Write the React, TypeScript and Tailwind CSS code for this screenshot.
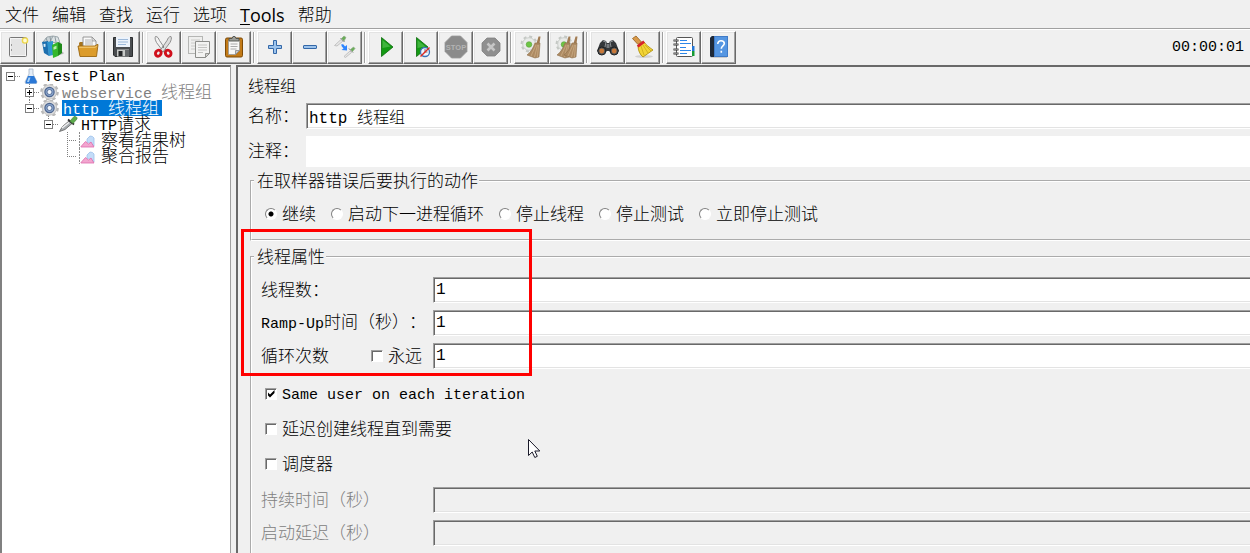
import React from "react";

type IconProps = { children: React.ReactNode };

function Glyph({ children }: IconProps) {
  return (
    <svg viewBox="0 0 24 24" className="size-6" aria-hidden="true">
      {children}
    </svg>
  );
}

const NewIcon = () => (
  <Glyph>
    <rect x="3.5" y="2.5" width="17" height="19" rx="1" fill="#f4f4f4" stroke="#777" />
    <path d="M5 4h12v3h2v13H5z" fill="#e4e4e4" />
    <path d="M5.5 9v2M5.5 14v2" stroke="#999" />
    <circle cx="19" cy="5.5" r="2.6" fill="#fffbd0" stroke="#ecd54a" strokeWidth="1.4" />
  </Glyph>
);

const BooksIcon = () => (
  <Glyph>
    <path d="M14 21l8-2 1-1-4-3z" fill="#b9b9b9" />
    <path d="M2 7l4-5 6-1 1 6-5 3z" fill="#c9d2d6" stroke="#8a979d" strokeWidth=".8" />
    <path d="M9 7l3-6 5 1 2 6z" fill="#dde3e5" stroke="#8a979d" strokeWidth=".8" />
    <path d="M5 3l2 5M9 2l1 5M14 2l1 5" stroke="#7c8a91" strokeWidth=".8" />
    <path d="M1 7l6-1 1 15-5-3z" fill="#1d6fae" />
    <path d="M6 7l6-1v14l-4 1z" fill="#2f96cf" />
    <path d="M2.5 9l2-.3v3l-1.8.3z" fill="#d9edf8" />
    <path d="M11 10l6-3v14l-5 2z" fill="#35b72c" />
    <path d="M17 7l4 2v9l-4 3z" fill="#1f8a1a" />
    <path d="M12.5 12l3-1.3v3l-3 1z" fill="#bdf0a9" />
  </Glyph>
);

const OpenIcon = () => (
  <Glyph>
    <path d="M3 8l1-1h5l1 1h10v13H4z" fill="#a8741b" />
    <path d="M7 2h9l4 4v9H7z" fill="#fafafa" stroke="#8c8c8c" strokeWidth=".9" />
    <path d="M9 5h6M9 7h8M9 9h8" stroke="#aaa" strokeWidth=".9" />
    <path d="M16 2l4 4h-4z" fill="#ddd" stroke="#8c8c8c" strokeWidth=".7" />
    <path d="M2 11h17l2-1.5h1l-1.500 12H4z" fill="#dc9c2b" stroke="#9b6812" strokeWidth=".9" />
    <path d="M3.200 12.200h16l1.500-1" stroke="#f8d27e" fill="none" />
  </Glyph>
);

const SaveIcon = () => (
  <Glyph>
    <path d="M2.500 2.500h19v19H4l-1.500-1.500z" fill="#4a4d50" stroke="#2c2e30" />
    <rect x="5" y="2" width="14" height="10" fill="#edf3fb" />
    <path d="M7 4.500h10M7 7h10M7 9.500h8" stroke="#9db9d9" />
    <rect x="6" y="14.500" width="12" height="7" fill="#c8cac8" />
    <rect x="7.500" y="16" width="4" height="5" fill="#26282a" />
    <rect x="14" y="15" width="4" height="6.500" fill="#66696b" />
  </Glyph>
);

const CutIcon = () => (
  <Glyph>
    <path d="M3.500 1.500c2.500 0 3 2 4 4L14 15l-2.500 2L4.500 7.500C3.500 5.500 2.500 3 3.500 1.500z" fill="#f2f2f2" stroke="#858585" strokeWidth=".9" />
    <path d="M19 1.500c-2.500 0-3 2-4 4L8.500 15l2.500 2L18 7.500c1-2 2-4.500 1-6z" fill="#dedede" stroke="#858585" strokeWidth=".9" />
    <circle cx="11.300" cy="12" r=".8" fill="#555" />
    <ellipse cx="6.300" cy="18.200" rx="2.700" ry="3.100" fill="none" stroke="#d0101c" strokeWidth="2.900" transform="rotate(35 6.300 18.200)" />
    <ellipse cx="16.200" cy="18.200" rx="2.700" ry="3.100" fill="none" stroke="#d0101c" strokeWidth="2.900" transform="rotate(-35 16.200 18.200)" />
  </Glyph>
);

const CopyIcon = () => (
  <Glyph>
    <rect x="1.500" y="1.500" width="14" height="17" fill="#efefee" stroke="#b5b6b4" />
    <path d="M4 5h9M4 8h4M4 11h4M4 14h4" stroke="#cacac8" />
    <path d="M8.500 6.500h14v12l-4 4h-10z" fill="#f3f3f2" stroke="#8c8d8a" />
    <path d="M11 10h9M11 12.500h9M11 15h9M11 17.500h5" stroke="#c4c4c2" />
    <path d="M18.500 22.500v-4h4z" fill="#d0d0ce" stroke="#8c8d8a" strokeWidth=".9" />
  </Glyph>
);

const PasteIcon = () => (
  <Glyph>
    <rect x="3.500" y="3" width="17" height="19" rx="1.500" fill="#c27a17" stroke="#7e4b07" />
    <path d="M6.500 5.500h11v10l-4 4h-7z" fill="#f7f7f6" stroke="#999" strokeWidth=".8" />
    <path d="M8.500 9h7M8.500 11.500h7M8.500 14h6" stroke="#aaa" />
    <path d="M13.500 19.500v-4h4z" fill="#ccc" stroke="#888" strokeWidth=".8" />
    <path d="M7 6V3.500h3l1-2h2l1 2h3V6z" fill="#9b9d98" stroke="#4e504d" strokeWidth=".9" />
  </Glyph>
);

const PlusIcon = () => (
  <Glyph>
    <path d="M10.500 5.500h3v5h5v3h-5v5h-3v-5h-5v-3h5z" fill="#9cc3ec" stroke="#3468a8" strokeLinejoin="round" />
  </Glyph>
);

const MinusIcon = () => (
  <Glyph>
    <rect x="5.500" y="10.500" width="13" height="3" rx=".5" fill="#9cc3ec" stroke="#3468a8" />
  </Glyph>
);

const ToggleIcon = () => (
  <Glyph>
    <path d="M1.500 10.500l6.500-6 2 1.500-6 5z" fill="#e6e6e6" stroke="#bdbdbd" strokeWidth=".9" />
    <path d="M7.500 3l4 4" stroke="#777" />
    <path d="M8.500 3.500l2.500-2.500 2 1.500-2 3.500z" fill="#69ad58" stroke="#8fae87" strokeWidth=".7" />
    <path d="M11 21.500l6-5.500 1.500 1.500-6 5z" fill="#e6e6e6" stroke="#bdbdbd" strokeWidth=".9" />
    <path d="M16 13.500l4 4" stroke="#777" />
    <path d="M17.500 14.500l3-2.500 1.500 1.500-2.500 3z" fill="#69ad58" stroke="#8fae87" strokeWidth=".7" />
    <path d="M8.500 9l2 .5 1.500 2 2-1.500v5.500l-5.500-.500 2-1.500-2-2.500z" fill="#2f86ff" />
  </Glyph>
);

const PlayShape = () => (
  <>
    <path d="M7.500 2.500v19L19 12z" fill="#139a13" stroke="#0a6a0a" strokeWidth=".8" />
    <path d="M8.500 5v8l8-1.500z" fill="#5fc75b" opacity=".6" />
  </>
);

const StartIcon = () => (
  <Glyph>
    <PlayShape />
  </Glyph>
);

const StartNoPauseIcon = () => (
  <Glyph>
    <PlayShape />
    <circle cx="16" cy="17" r="4.500" fill="#eef5ff" stroke="#3973b8" strokeWidth="1.300" />
    <path d="M16 14v3h2.500" stroke="#555" fill="none" strokeWidth=".8" />
    <path d="M11.500 21.500L20.500 12.500" stroke="#e02a20" strokeWidth="1.500" />
  </Glyph>
);

const StopIcon = () => (
  <Glyph>
    <path d="M7.500 1h9L23 7.500v9L16.500 23h-9L1 16.500v-9z" fill="#8b8b8b" stroke="#999" strokeWidth=".8" />
    <text x="12" y="15" textAnchor="middle" fontFamily="Liberation Sans, sans-serif" fontWeight="bold" fontSize="7.500" fill="#b4b4b4">
      STOP
    </text>
  </Glyph>
);

const ShutdownIcon = () => (
  <Glyph>
    <path d="M8 3h8l5 5v8l-5 5H8l-5-5V8z" fill="#8f8f8f" stroke="#808080" strokeWidth=".8" />
    <path d="M8.500 8.500l7 7M15.500 8.500l-7 7" stroke="#c6c6c6" strokeWidth="2.600" />
  </Glyph>
);

const GearShape = () => (
  <>
    <circle cx="9" cy="9" r="7.400" fill="none" stroke="#c4c8c4" strokeWidth="2" strokeDasharray="3 2.800" />
    <circle cx="9" cy="9" r="6.300" fill="#e9ebe9" stroke="#c0c4c0" strokeWidth=".8" />
    <circle cx="9" cy="9.500" r="2.800" fill="#6cc644" stroke="#5aa03b" strokeWidth=".6" />
  </>
);

const BroomShape = () => (
  <>
    <path d="M18.500 1.500h2l-1 7h-3z" fill="#a27c53" />
    <path d="M15 8h5l-1 14-4 1-8-3c4-3 6-7 8-12z" fill="#ad8a62" stroke="#8d6f4a" strokeWidth=".6" />
    <path d="M16 10l-5 11M17.500 10l-3 12M18.500 10l-1 12" stroke="#cfb08a" strokeWidth=".7" />
  </>
);

const ClearIcon = () => (
  <Glyph>
    <GearShape />
    <BroomShape />
  </Glyph>
);

const ClearAllIcon = () => (
  <Glyph>
    <GearShape />
    <g transform="translate(-5 0)">
      <BroomShape />
    </g>
    <g transform="translate(2 0)">
      <BroomShape />
    </g>
  </Glyph>
);

const SearchIcon = () => (
  <Glyph>
    <path d="M4 8l3-3 3 1 1 2h2l1-2 3-1 3 3 3 8-5 4-5-4h-2l-5 4-5-4z" fill="#34373a" />
    <path d="M7 6l3 1-1 5M17 6l-3 1 1 5" stroke="#8b9093" fill="none" />
    <circle cx="5.800" cy="16" r="4" fill="#54585b" stroke="#1c1e1f" />
    <circle cx="18.200" cy="16" r="4" fill="#54585b" stroke="#1c1e1f" />
    <circle cx="5.800" cy="16" r="2.400" fill="#c97838" />
    <circle cx="18.200" cy="16" r="2.400" fill="#c97838" />
    <rect x="10.500" y="9" width="3" height="4" fill="#777b7e" />
  </Glyph>
);

const ResetIcon = () => (
  <Glyph>
    <ellipse cx="13" cy="21.500" rx="9" ry="1.500" fill="#d2d2d2" />
    <path d="M1.500 3.500L5 1l5.500 6L7 9.500z" fill="#d99a4a" stroke="#95601c" strokeWidth=".8" />
    <path d="M7 11l6-4c2 3 5 5 9 8l-10 7C9 20 7 15 7 11z" fill="#f2d435" stroke="#a88908" strokeWidth=".8" />
    <path d="M10 11l3 9M12 10l5 8M14 10l6 6" stroke="#c9aa1c" strokeWidth=".8" />
    <path d="M5.800 10.500l6.500-5 1.700 2.300-6.500 4.700z" fill="#d6232a" />
  </Glyph>
);

const FunctionsIcon = () => (
  <Glyph>
    <rect x="4.500" y="2.500" width="16" height="19" rx="1" fill="#fff" stroke="#555" />
    <path d="M8 5.500h7M8 8.500h11M8 12.500h6M8 15.500h11M8 18.500h7" stroke="#2c86e8" />
    <path d="M1.500 5.500h5M1.500 9.500h5M1.500 14.500h5M1.500 18.500h5" stroke="#333" strokeWidth="1.800" />
    <path d="M2 5.300h4M2 9.300h4M2 14.300h4M2 18.300h4" stroke="#ddd" strokeWidth=".6" />
    <rect x="20" y="11" width="2.500" height="5" fill="#2276d8" />
    <rect x="20" y="16" width="2.500" height="5" fill="#169b35" />
  </Glyph>
);

const HelpIcon = () => (
  <Glyph>
    <path d="M3 3l2-2h16v21H4l-1-1z" fill="#4a86d4" />
    <path d="M3 3l2-2h2v21H4l-1-1z" fill="#1f2937" />
    <path d="M3.500 22.500H20" stroke="#ccc" />
    <rect x="7.500" y="1.500" width="13" height="20" fill="#5596e2" stroke="#3d77c2" strokeWidth=".8" />
    <path
      d="M10.800 9c0-2.100 1.400-3.200 3.200-3.200s3.300 1 3.300 2.800c0 2.400-3 2.400-3 5.200M14.300 15.800v1.900"
      fill="none"
      stroke="#fff"
      strokeWidth="1.600"
    />
  </Glyph>
);

const toolGroups = [
  [
    { name: "Templates", Icon: NewIcon },
    { name: "New", Icon: BooksIcon },
    { name: "Open", Icon: OpenIcon },
    { name: "Save", Icon: SaveIcon },
  ],
  [
    { name: "Cut", Icon: CutIcon },
    { name: "Copy", Icon: CopyIcon },
    { name: "Paste", Icon: PasteIcon },
  ],
  [
    { name: "Expand all", Icon: PlusIcon },
    { name: "Collapse all", Icon: MinusIcon },
    { name: "Toggle", Icon: ToggleIcon },
  ],
  [
    { name: "Start", Icon: StartIcon },
    { name: "Start no pauses", Icon: StartNoPauseIcon },
    { name: "Stop", Icon: StopIcon },
    { name: "Shutdown", Icon: ShutdownIcon },
  ],
  [
    { name: "Clear", Icon: ClearIcon },
    { name: "Clear all", Icon: ClearAllIcon },
  ],
  [
    { name: "Search", Icon: SearchIcon },
    { name: "Reset search", Icon: ResetIcon },
  ],
  [
    { name: "Function helper", Icon: FunctionsIcon },
    { name: "Help", Icon: HelpIcon },
  ],
];

function MenuBar() {
  return (
    <nav className="flex h-[28px] shrink-0 items-center gap-[13px] pt-0.5 pl-[5px] font-['Open_Sans','Noto_Sans_CJK_SC',sans-serif] text-[17px] leading-6">
      <button>文件</button>
      <button>编辑</button>
      <button>查找</button>
      <button>运行</button>
      <button>选项</button>
      <button className="text-[18px] font-medium">
        <span className="underline underline-offset-2">T</span>ools
      </button>
      <button>帮助</button>
    </nav>
  );
}

function ToolBar() {
  return (
    <header className="flex h-[37px] shrink-0 items-center border-t border-[#a0a0a0] shadow-[inset_0_1px_0_#fff]">
      {toolGroups.map((group, i) => (
        <React.Fragment key={i}>
          {i > 0 && <div className="mx-0.5 h-[31px] w-0.5 border-r border-l border-r-white border-l-[#a0a0a0]" />}
          {group.map(({ name, Icon }) => (
            <button
              key={name}
              aria-label={name}
              className="flex h-[33px] w-[35px] items-center justify-center border border-t-white border-r-[#696969] border-b-[#696969] border-l-white shadow-[inset_-1px_-1px_0_#a0a0a0,inset_1px_1px_0_#e3e3e3]"
            >
              <Icon />
            </button>
          ))}
        </React.Fragment>
      ))}
      <span className="mr-1.5 ml-auto pt-0.5 text-[15px]">00:00:01</span>
    </header>
  );
}

const FlaskIcon = () => (
  <svg viewBox="0 0 20 16" className="h-4 w-5" aria-hidden="true">
    <path d="M9 1h4v5l4 8-1 2H6l-1-2 4-8z" fill="#e4edf7" stroke="#a3b3c5" strokeWidth=".8" />
    <path d="M8 8h6l3 6-1 1.500H6L5.500 14z" fill="#2b78d6" />
    <path d="M8.500 9.500h2L9 14H7z" fill="#a8d2fa" />
  </svg>
);

const GearIcon = () => (
  <svg viewBox="0 0 20 16" className="h-4 w-5" aria-hidden="true">
    <circle cx="10.500" cy="8" r="8.200" fill="none" stroke="#b9b9b9" strokeWidth="2.200" strokeDasharray="3.400 3.040" />
    <circle cx="10.500" cy="8" r="7.200" fill="#dcdcdc" stroke="#b9b9b9" strokeWidth=".8" />
    <circle cx="10.500" cy="8" r="4.600" fill="#8ba6cd" stroke="#4d6690" strokeWidth="1.200" />
    <circle cx="10.500" cy="8" r="2.500" fill="#f1f6fc" stroke="#35507f" strokeWidth=".7" />
  </svg>
);

const PipetteIcon = () => (
  <svg viewBox="0 0 20 16" className="h-4 w-5" aria-hidden="true">
    <path d="M1.500 15.500l3-5L11 5l3 2.500-7 6z" fill="#a9aeb2" stroke="#6a6a6a" strokeWidth=".9" />
    <path d="M4 12l7-5.500" stroke="#f3f3f3" strokeWidth="1.300" />
    <path d="M10 3.500l6 5" stroke="#333" strokeWidth="1.800" />
    <path d="M12 5l4-4.500c2-.5 3.500 1 3 2.500L15 7.500z" fill="#5cab4c" stroke="#4a8a3e" strokeWidth=".7" />
  </svg>
);

const GraphIcon = () => (
  <svg viewBox="0 0 20 16" className="h-4 w-5" aria-hidden="true">
    <path d="M2.500 0v16" stroke="#8a8a8a" strokeDasharray="2 1" />
    <path d="M10 10V7l3-3 2.500 .5L17 6v8z" fill="#c3dcf8" stroke="#9dc0ea" strokeWidth=".8" />
    <path d="M4 14.500l4.500-5 3 2.500L14 10l3 5H4z" fill="#f2a6cf" stroke="#dd6bac" strokeWidth=".8" />
  </svg>
);

type BranchProps = { open?: boolean; leaf?: boolean; up?: boolean; down?: boolean };

function Branch({ open, leaf, up, down }: BranchProps) {
  const dots = { stroke: "#808080", strokeDasharray: "1 1" };
  return (
    <svg viewBox="0 0 14 16" className="h-4 w-3.5" aria-hidden="true">
      {up && <path d={leaf ? "M4.500 0v9" : "M4.500 0v4"} {...dots} />}
      {down && <path d={leaf ? "M4.500 8v8" : "M4.500 13v3"} {...dots} />}
      <path d={leaf ? "M4 8.500h10" : "M9 8.500h5"} {...dots} />
      {!leaf && (
        <>
          <rect x=".5" y="4.500" width="8" height="8" fill="#fff" stroke="#808080" />
          <path d={open ? "M2 8.500h5" : "M2 8.500h5M4.500 6v5"} stroke="#000" />
        </>
      )}
    </svg>
  );
}

function TreePanel() {
  return (
    <aside className="w-[231px] shrink-0 border-t-2 border-r border-l-2 border-t-[#696969] border-r-[#a0a0a0] border-l-[#808080] bg-white">
      <ul className="pt-px pl-1 text-[17px] leading-[19px] whitespace-nowrap">
        <li className="flex h-4 items-center">
          <button aria-label="Collapse Test Plan">
            <Branch open />
          </button>
          <FlaskIcon />
          <span className="h-4 pl-1 text-[15px]">Test Plan</span>
        </li>
        <li className="flex h-4 items-center pl-[19px]">
          <button aria-label="Expand webservice">
            <Branch up down />
          </button>
          <GearIcon />
          <span className="h-4 pl-[3px] text-[#808080]">
            <span className="text-[15px]">webservice </span>线程组
          </span>
        </li>
        <li className="flex h-4 items-center pl-[19px]">
          <button aria-label="Collapse http">
            <Branch open up />
          </button>
          <GearIcon />
          <span className="ml-[3px] h-4 bg-[#0078d7] pr-[3px] pl-px text-white">
            <span className="text-[15px]">http </span>线程组
          </span>
        </li>
        <li className="flex h-4 items-center pl-[38px]">
          <button aria-label="Collapse HTTP">
            <Branch open up />
          </button>
          <PipetteIcon />
          <span className="h-4 pl-[3px]">
            <span className="text-[15px]">HTTP</span>请求
          </span>
        </li>
        <li className="flex h-4 items-center pl-[57px]">
          <Branch leaf up down />
          <GraphIcon />
          <span className="h-4 pl-1">察看结果树</span>
        </li>
        <li className="flex h-4 items-center pl-[57px]">
          <Branch leaf up />
          <GraphIcon />
          <span className="h-4 pl-1">聚合报告</span>
        </li>
      </ul>
    </aside>
  );
}

function Field({ id, value, disabled }: { id: string; value?: string; disabled?: boolean }) {
  return (
    <input
      id={id}
      type="text"
      defaultValue={value}
      disabled={disabled}
      className="h-[26px] min-w-0 flex-1 border-t border-b border-l border-t-[#a0a0a0] border-b-white border-l-[#a0a0a0] bg-white px-0.5 text-[16px] leading-5 shadow-[inset_1px_1px_0_#696969,inset_0_-1px_0_#e3e3e3] outline-none disabled:bg-[#f0f0f0]"
    />
  );
}

function Radio({ label, checked }: { label: string; checked?: boolean }) {
  return (
    <label className="flex h-5 items-center gap-[5px]">
      <input
        type="radio"
        name="on-error"
        defaultChecked={checked}
        className="size-3 appearance-none rounded-full border border-t-[#808080] border-r-white border-b-white border-l-[#808080] bg-white checked:bg-[radial-gradient(circle,#000_2px,#fff_3px)]"
      />
      <span className="pt-1">{label}</span>
    </label>
  );
}

function Check({ children, checked }: { children: React.ReactNode; checked?: boolean }) {
  return (
    <label className="flex h-5 items-center gap-[5px]">
      <span className="grid">
        <input
          type="checkbox"
          defaultChecked={checked}
          className="peer col-start-1 row-start-1 size-3 appearance-none border border-t-[#a0a0a0] border-r-white border-b-white border-l-[#a0a0a0] bg-white shadow-[inset_1px_1px_0_#696969]"
        />
        <svg viewBox="0 0 12 12" className="pointer-events-none invisible col-start-1 row-start-1 size-3 peer-checked:visible" aria-hidden="true">
          <path d="M3 4.500v3l2 2 4.500-4.500V2L5 6.500z" fill="#000" />
        </svg>
      </span>
      <span className="pt-[3px]">{children}</span>
    </label>
  );
}

function Group({ title, children }: { title: React.ReactNode; children: React.ReactNode }) {
  return (
    <fieldset className="ml-0.5 min-w-0 border-2 border-r-0 border-white pl-0.5 [border-style:groove]">
      <legend className="h-5 pr-px pl-[3px] leading-6">{title}</legend>
      {children}
    </fieldset>
  );
}

function ThreadGroupPanel() {
  return (
    <main className="min-w-0 flex-1 border-t-2 border-l-2 border-[#696969] pt-[10px] pl-[10px] text-[17px] leading-5 whitespace-nowrap">
      <h1 className="h-5 text-[16px] leading-[23px]">线程组</h1>
      <div className="mt-1.5 flex items-center">
        <label htmlFor="name" className="w-[58px] pt-[3px]">名称：</label>
        <Field id="name" value="http 线程组" />
      </div>
      <div className="mt-[7px] mb-1 flex items-center">
        <label htmlFor="comment" className="w-[58px] pt-[3px]">注释：</label>
        <input id="comment" type="text" className="h-[31px] min-w-0 flex-1 bg-white px-[3px] outline-none" />
      </div>
      <Group title="在取样器错误后要执行的动作">
        <div className="flex gap-[15px] pt-[13px] pb-[15px] pl-[11px]">
          <Radio label="继续" checked />
          <Radio label="启动下一进程循环" />
          <Radio label="停止线程" />
          <Radio label="停止测试" />
          <Radio label="立即停止测试" />
        </div>
      </Group>
      <div className="h-1.5" />
      <Group title="线程属性">
        <div className="flex flex-col gap-[7px] pt-[10px] pl-[7px]">
          <div className="flex items-center">
            <label htmlFor="threads" className="w-[172px] pt-[3px]">线程数：</label>
            <Field id="threads" value="1" />
          </div>
          <div className="flex items-center">
            <label htmlFor="ramp" className="w-[172px] pt-[3px]">
              <span className="text-[15px]">Ramp-Up</span>时间（秒）：
            </label>
            <Field id="ramp" value="1" />
          </div>
          <div className="flex items-center">
            <div className="flex w-[172px] items-center justify-between pr-[11px]">
              <label htmlFor="loops" className="pt-[3px]">循环次数</label>
              <Check>永远</Check>
            </div>
            <Field id="loops" value="1" />
          </div>
        </div>
        <div className="flex flex-col items-start gap-[15px] pt-[15px] pb-[13px] pl-[11px]">
          <Check checked>
            <span className="text-[15px]">Same user on each iteration</span>
          </Check>
          <Check>延迟创建线程直到需要</Check>
          <Check>调度器</Check>
        </div>
        <div className="flex flex-col gap-[7px] pb-4 pl-[7px] text-[#808080]">
          <div className="flex items-center">
            <label htmlFor="duration" className="w-[172px] pt-[3px]">持续时间（秒）</label>
            <Field id="duration" disabled />
          </div>
          <div className="flex items-center">
            <label htmlFor="delay" className="w-[172px] pt-[3px]">启动延迟（秒）</label>
            <Field id="delay" disabled />
          </div>
        </div>
      </Group>
    </main>
  );
}

export default function App() {
  return (
    <div className="relative flex h-screen flex-col overflow-hidden bg-[#f0f0f0] font-['Liberation_Mono','Noto_Sans_CJK_SC',monospace] font-light text-black [text-spacing-trim:space-all]">
      <MenuBar />
      <ToolBar />
      <div className="flex min-h-0 flex-1 gap-[5px]">
        <TreePanel />
        <ThreadGroupPanel />
      </div>
      <div className="pointer-events-none absolute top-[229px] left-[241px] h-[147px] w-[291px] border-3 border-[#ff0000]" />
      <svg viewBox="0 0 13 20" className="pointer-events-none absolute top-[439px] left-[528px] h-5 w-[13px]" aria-hidden="true">
        <path d="M.5.500v16l3.700-3.500 2.600 5.500 2.500-1.200-2.500-5.300h5z" fill="#fff" stroke="#1a1a2a" />
      </svg>
    </div>
  );
}
